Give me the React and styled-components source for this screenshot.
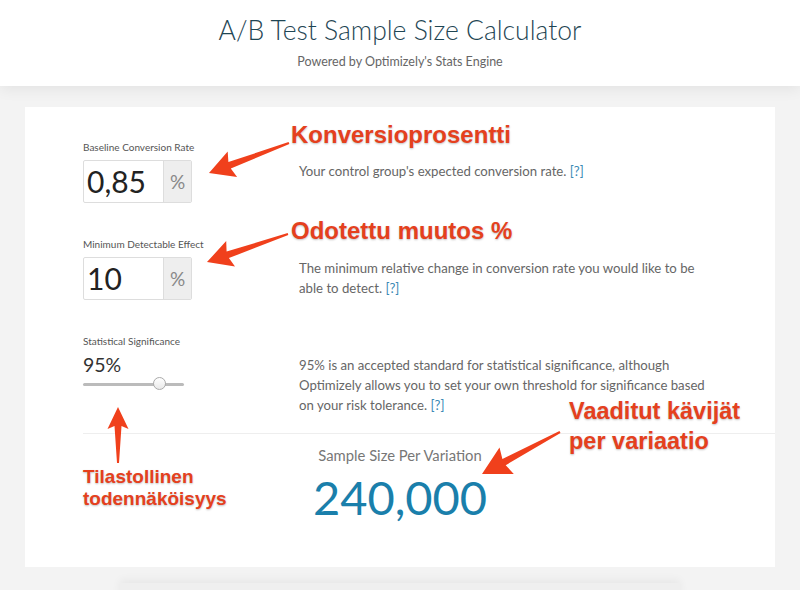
import React from 'react';
import styled, { createGlobalStyle } from 'styled-components';

const GlobalStyle = createGlobalStyle`
  html, body {
    margin: 0;
    padding: 0;
    background: #f3f3f3;
    font-family: Lato, "Open Sans", sans-serif;
  }
`;

const Page = styled.div`
  position: relative;
  width: 800px;
  height: 590px;
  overflow: hidden;
  background: #f3f3f3;
`;

const Header = styled.header`
  height: 86px;
  background: #fff;
  box-shadow: 0 3px 14px rgba(0, 0, 0, 0.07);
  text-align: center;
  padding-top: 13px;
  box-sizing: border-box;
  position: relative;
  z-index: 1;
`;

const Title = styled.h1`
  margin: 0;
  font-size: 26.5px;
  line-height: 34px;
  font-weight: 300;
  color: #1f4654;
`;

const Subtitle = styled.div`
  margin-top: 7px;
  font-size: 12.5px;
  color: #666;
`;

const Card = styled.main`
  margin: 21px 25px 0;
  height: 460px;
  background: #fff;
  box-sizing: border-box;
  padding: 34px 0 0 58px;
`;

const Field = styled.section`
  display: grid;
  grid-template-columns: 216px 1fr;
  margin-bottom: ${({ $gap }) => $gap}px;
`;

const Label = styled.div`
  font-size: 10px;
  line-height: 13px;
  color: #555;
  margin-bottom: 6px;
`;

const InputGroup = styled.div`
  display: flex;
  width: 109px;
  height: 43px;
  border: 1px solid #ddd;
  border-radius: 2px;
  box-sizing: border-box;
  overflow: hidden;
`;

const Value = styled.div`
  flex: 1;
  font-size: 30px;
  line-height: 41px;
  padding-left: 3px;
  color: #222;
`;

const Addon = styled.div`
  width: 27px;
  background: #eee;
  border-left: 1px solid #ddd;
  color: #888;
  font-size: 19px;
  line-height: 41px;
  text-align: center;
`;

const Description = styled.p`
  margin: 0;
  padding-top: 20px;
  font-size: 13.2px;
  line-height: 20px;
  color: #666;
  max-width: 412px;
`;

const Help = styled.a`
  color: #3a8ab5;
`;

const SigValue = styled.div`
  font-size: 19.5px;
  line-height: 22px;
  color: #333;
`;

const Track = styled.div`
  position: relative;
  width: 101px;
  height: 3px;
  margin-top: 7px;
  background: #bbb;
  border-radius: 2px;
`;

const Thumb = styled.div`
  position: absolute;
  top: -6px;
  width: 13px;
  height: 13px;
  border-radius: 50%;
  background: linear-gradient(#fff, #e9e9e9);
  border: 1px solid #aaa;
  box-sizing: border-box;
`;

const Divider = styled.hr`
  margin: 0;
  border: 0;
  border-top: 1px solid #eee;
`;

const Result = styled.div`
  text-align: center;
  margin-left: -58px;
  padding-top: 11px;
`;

const ResultLabel = styled.div`
  font-size: 14.8px;
  line-height: 20px;
  color: #777;
`;

const ResultValue = styled.div`
  font-size: 47px;
  line-height: 56px;
  margin-top: 4px;
  color: #1a7fab;
`;

const Footer = styled.div`
  margin: 16px 120px 0;
  height: 30px;
  background: #efefef;
  box-shadow: 0 -3px 10px rgba(0, 0, 0, 0.05);
`;

const Overlay = styled.svg`
  position: absolute;
  left: 0;
  top: 0;
  pointer-events: none;
`;

const Note = styled.div`
  position: absolute;
  left: ${({ $x }) => $x}px;
  top: ${({ $y }) => $y}px;
  font-family: "Liberation Sans", Arial, sans-serif;
  font-weight: 700;
  font-size: ${({ $size }) => $size || 24}px;
  line-height: ${({ $lh }) => $lh || 26}px;
  color: #e5401d;
  text-shadow: 0 1px 2px rgba(0, 0, 0, 0.25), 0 0 2px #fff;
  white-space: nowrap;
`;

// polygon for a tapered arrow from tail (x1,y1) to tip (x2,y2)
const arrow = ([x1, y1, x2, y2], head = 24, headW = 26, t0 = 2, t1 = 7) => {
  const dx = x2 - x1;
  const dy = y2 - y1;
  const len = Math.hypot(dx, dy);
  const ux = dx / len;
  const uy = dy / len;
  const nx = -uy;
  const ny = ux;
  const bx = x2 - ux * head;
  const by = y2 - uy * head;
  const p = (x, y) => `${x.toFixed(1)},${y.toFixed(1)}`;
  return [
    p(x1 + nx * t0 / 2, y1 + ny * t0 / 2),
    p(bx + ux * 3 + nx * t1 / 2, by + uy * 3 + ny * t1 / 2),
    p(bx + nx * headW / 2, by + ny * headW / 2),
    p(x2, y2),
    p(bx - nx * headW / 2, by - ny * headW / 2),
    p(bx + ux * 3 - nx * t1 / 2, by + uy * 3 - ny * t1 / 2),
    p(x1 - nx * t0 / 2, y1 - ny * t0 / 2),
  ].join(' ');
};

const arrows = [
  { pts: [289, 143, 209, 173], head: 25, w: 27 },
  { pts: [288, 234, 207, 262], head: 25, w: 27 },
  { pts: [118, 463, 118, 407], head: 22, w: 21 },
  { pts: [560, 432, 482, 474], head: 28, w: 30 },
];

export default function App() {
  return (
    <Page>
      <GlobalStyle />
      <Header>
        <Title>A/B Test Sample Size Calculator</Title>
        <Subtitle>Powered by Optimizely's Stats Engine</Subtitle>
      </Header>

      <Card>
        <Field $gap={35}>
          <div>
            <Label>Baseline Conversion Rate</Label>
            <InputGroup>
              <Value>0,85</Value>
              <Addon>%</Addon>
            </InputGroup>
          </div>
          <Description>
            Your control group's expected conversion rate. <Help>[?]</Help>
          </Description>
        </Field>

        <Field $gap={35}>
          <div>
            <Label>Minimum Detectable Effect</Label>
            <InputGroup>
              <Value>10</Value>
              <Addon>%</Addon>
            </InputGroup>
          </div>
          <Description>
            The minimum relative change in conversion rate you would like to be
            able to detect. <Help>[?]</Help>
          </Description>
        </Field>

        <Field $gap={18}>
          <div>
            <Label>Statistical Significance</Label>
            <SigValue>95%</SigValue>
            <Track>
              <Thumb style={{ left: `${0.75 * 101 - 6}px` }} />
            </Track>
          </div>
          <Description>
            95% is an accepted standard for statistical significance, although
            Optimizely allows you to set your own threshold for significance based
            on your risk tolerance. <Help>[?]</Help>
          </Description>
        </Field>

        <Divider />
        <Result>
          <ResultLabel>Sample Size Per Variation</ResultLabel>
          <ResultValue>240,000</ResultValue>
        </Result>
      </Card>
      <Footer />

      <Overlay width="800" height="590">
        {arrows.map((a, i) => (
          <polygon key={i} points={arrow(a.pts, a.head, a.w)} fill="#f0401c" />
        ))}
      </Overlay>

      <Note $x={291} $y={122}>Konversioprosentti</Note>
      <Note $x={291} $y={218}>Odotettu muutos %</Note>
      <Note $x={569} $y={396} $lh={30} $size={23.5}>
        Vaaditut kävijät
        <br />
        per variaatio
      </Note>
      <Note $x={83} $y={466} $lh={22} $size={19}>
        Tilastollinen
        <br />
        todennäköisyys
      </Note>
    </Page>
  );
}
